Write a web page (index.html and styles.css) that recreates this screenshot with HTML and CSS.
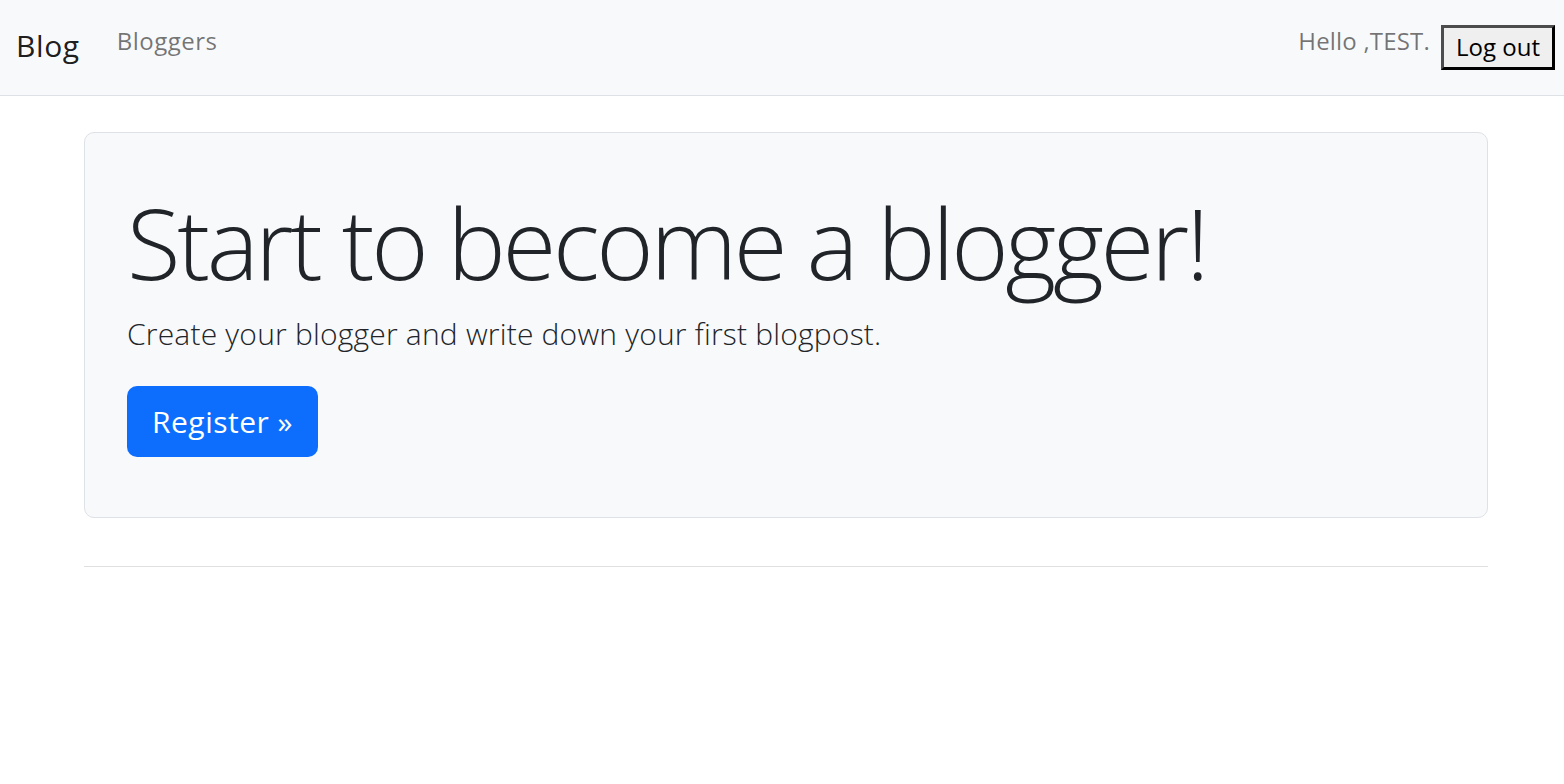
FILE: index.html
```html
<!DOCTYPE html>
<html lang="en">
<head>
<meta charset="utf-8">
<title>Blog</title>
<link rel="stylesheet" href="styles.css">
</head>
<body>
<nav class="navbar">
  <a class="brand" href="#">Blog</a>
  <a class="nav-link" href="#">Bloggers</a>
  <div class="nav-right">
    <span class="hello">Hello ,TEST.</span>
    <button class="logout" type="button">Log out</button>
  </div>
</nav>
<main class="container">
  <section class="jumbotron">
    <h1 class="display">Start to become a blogger!</h1>
    <p class="lead">Create your blogger and write down your first blogpost.</p>
    <a class="btn-primary" href="#">Register &raquo;</a>
  </section>
  <hr class="divider">
</main>
</body>
</html>
```
FILE: styles.css
```css
* { box-sizing: border-box; }
html, body { margin: 0; padding: 0; }
body {
  font-family: "Open Sans", "Noto Sans", sans-serif;
  color: #212529;
  background: #fff;
}
a { text-decoration: none; }

.navbar {
  height: 96px;
  display: flex;
  align-items: flex-start;
  padding: 23px 9px 0 16px;
  background: #f8f9fa;
  border-bottom: 1px solid #dee2e6;
}
.brand {
  font-size: 30px;
  line-height: 1.5;
  letter-spacing: 0.6px;
  color: rgba(0, 0, 0, 0.9);
}
.nav-link {
  margin-left: 37px;
  font-size: 24px;
  line-height: 1.5;
  letter-spacing: 0.5px;
  color: rgba(0, 0, 0, 0.55);
}
.nav-right {
  margin-left: auto;
  display: flex;
  align-items: flex-start;
  gap: 11px;
}
.hello {
  font-size: 24px;
  line-height: 1.5;
  letter-spacing: 0.2px;
  color: rgba(0, 0, 0, 0.55);
}
.logout {
  margin-top: 2px;
  font-family: "Open Sans", "Noto Sans", sans-serif;
  font-size: 24px;
  line-height: 1.2;
  padding: 5px 12px;
  color: #000;
  background: #efefef;
  border: 3px solid;
  border-color: #4c4c4c #000 #000 #4c4c4c;
}

.container {
  margin: 0 76px 0 84px;
  padding-top: 36px;
}
.jumbotron {
  background: #f8f9fa;
  border: 1px solid #dee2e6;
  border-radius: 10px;
  padding: 51px 42px 60px;
}
.display {
  margin: 0;
  font-size: 98px;
  font-weight: 300;
  line-height: 1.2;
  letter-spacing: -3.3px;
  color: #212529;
}
.lead {
  margin: 9px 0 30px;
  font-size: 30px;
  font-weight: 300;
  line-height: 1.5;
  letter-spacing: 0.2px;
}
.btn-primary {
  display: inline-block;
  padding: 13px 25px;
  font-size: 30px;
  line-height: 1.5;
  letter-spacing: 0.5px;
  color: #fff;
  background: #0d6efd;
  border-radius: 10px;
}
.divider {
  margin: 48px 0 0;
  border: 0;
  border-top: 1px solid #dfe0e2;
}
```
